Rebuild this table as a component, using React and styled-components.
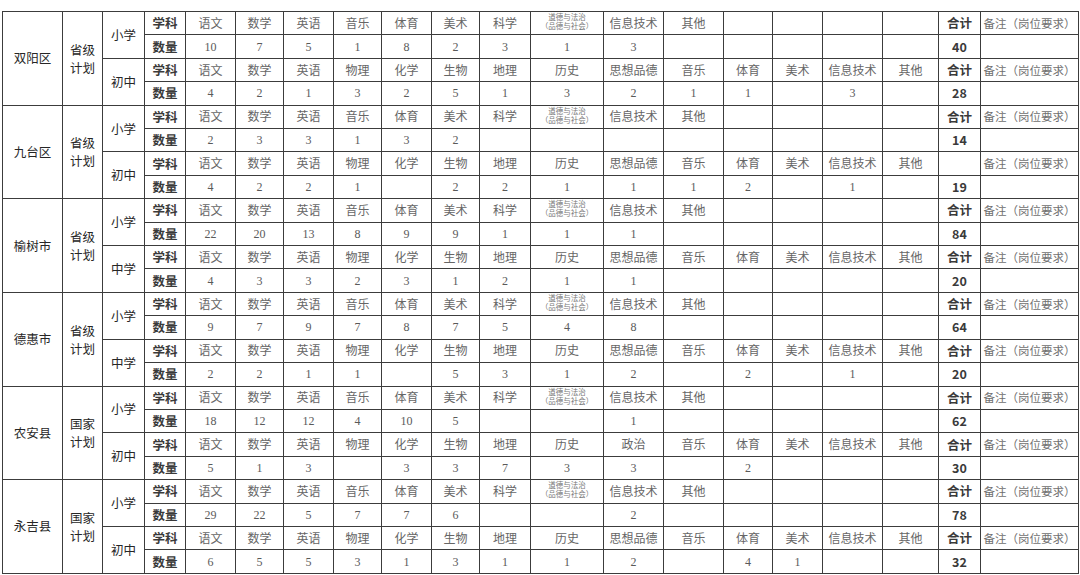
import React from 'react'
import styled, { createGlobalStyle } from 'styled-components'

const GlobalStyle = createGlobalStyle`
  html, body {
    margin: 0;
    padding: 0;
    background: #ffffff;
  }
  body {
    font-family: "Liberation Serif", "Noto Sans CJK SC", serif;
  }
`

const COLS = [60, 40, 42, 41, 50, 48, 50, 48, 50, 48, 51, 73, 60, 60, 49, 50, 60, 56, 42, 98]

const PRIMARY = ['语文', '数学', '英语', '音乐', '体育', '美术', '科学', 'DF', '信息技术', '其他', '', '', '', '']
const MIDDLE = ['语文', '数学', '英语', '物理', '化学', '生物', '地理', '历史', '思想品德', '音乐', '体育', '美术', '信息技术', '其他']
const MIDDLE_ZZ = ['语文', '数学', '英语', '物理', '化学', '生物', '地理', '历史', '政治', '音乐', '体育', '美术', '信息技术', '其他']

const blocks = [
  {
    name: '双阳区', plan: ['省级', '计划'], second: '初中',
    rows: [
      { subjects: PRIMARY, total: '合计', counts: ['10', '7', '5', '1', '8', '2', '3', '1', '3', '', '', '', '', ''], sum: '40' },
      { subjects: MIDDLE, total: '合计', counts: ['4', '2', '1', '3', '2', '5', '1', '3', '2', '1', '1', '', '3', ''], sum: '28' },
    ],
  },
  {
    name: '九台区', plan: ['省级', '计划'], second: '初中',
    rows: [
      { subjects: PRIMARY, total: '合计', counts: ['2', '3', '3', '1', '3', '2', '', '', '', '', '', '', '', ''], sum: '14' },
      { subjects: MIDDLE, total: '', counts: ['4', '2', '2', '1', '', '2', '2', '1', '1', '1', '2', '', '1', ''], sum: '19' },
    ],
  },
  {
    name: '榆树市', plan: ['省级', '计划'], second: '中学',
    rows: [
      { subjects: PRIMARY, total: '合计', counts: ['22', '20', '13', '8', '9', '9', '1', '1', '1', '', '', '', '', ''], sum: '84' },
      { subjects: MIDDLE, total: '合计', counts: ['4', '3', '3', '2', '3', '1', '2', '1', '1', '', '', '', '', ''], sum: '20' },
    ],
  },
  {
    name: '德惠市', plan: ['省级', '计划'], second: '中学',
    rows: [
      { subjects: PRIMARY, total: '合计', counts: ['9', '7', '9', '7', '8', '7', '5', '4', '8', '', '', '', '', ''], sum: '64' },
      { subjects: MIDDLE, total: '合计', counts: ['2', '2', '1', '1', '', '5', '3', '1', '2', '', '2', '', '1', ''], sum: '20' },
    ],
  },
  {
    name: '农安县', plan: ['国家', '计划'], second: '初中',
    rows: [
      { subjects: PRIMARY, total: '合计', counts: ['18', '12', '12', '4', '10', '5', '', '', '1', '', '', '', '', ''], sum: '62' },
      { subjects: MIDDLE_ZZ, total: '合计', counts: ['5', '1', '3', '', '3', '3', '7', '3', '3', '', '2', '', '', ''], sum: '30' },
    ],
  },
  {
    name: '永吉县', plan: ['国家', '计划'], second: '初中',
    rows: [
      { subjects: PRIMARY, total: '合计', counts: ['29', '22', '5', '7', '7', '6', '', '', '2', '', '', '', '', ''], sum: '78' },
      { subjects: MIDDLE, total: '合计', counts: ['6', '5', '5', '3', '1', '3', '1', '1', '2', '', '4', '1', '', ''], sum: '32' },
    ],
  },
]

const Table = styled.table`
  margin: 11px 0 0 2px;
  width: 1076px;
  table-layout: fixed;
  border-collapse: collapse;
  border: 1px solid #3c3c3c;
`

const Row = styled.tr`
  height: 23.42px;
`

const Cell = styled.td`
  border: 1px solid #3c3c3c;
  padding: 0;
  text-align: center;
  vertical-align: middle;
  font-size: 12px;
  line-height: 14px;
  color: #5a5a5a;
  font-family: "Liberation Serif", "Noto Sans CJK SC", serif;
  white-space: nowrap;
  overflow: hidden;
`

const Label = styled(Cell)`
  font-family: "Noto Sans CJK SC", "Liberation Sans", sans-serif;
  font-weight: ${p => (p.$bold ? 700 : 400)};
  color: ${p => (p.$bold ? '#3a3a3a' : '#262626')};
  font-size: 12.5px;
`

const Plan = styled.div`
  display: flex;
  flex-direction: column;
  align-items: center;
  gap: 3px;
  line-height: 15px;
`

const Tiny = styled.div`
  display: flex;
  flex-direction: column;
  align-items: center;
  font-size: 7.5px;
  line-height: 9px;
  color: #777;
  transform: translateY(-1px);
`

const Muted = styled.span`
  font-family: "Noto Sans CJK SC", sans-serif;
  font-weight: 400;
  color: #666;
`

const Note = styled.span`
  font-family: "Noto Sans CJK SC", sans-serif;
  font-size: 11.5px;
  color: #707070;
`

function Subject({ text }) {
  if (text === 'DF') {
    return (
      <Tiny>
        <span>道德与法治</span>
        <span>（品德与社会）</span>
      </Tiny>
    )
  }
  return <Muted>{text}</Muted>
}

function Block({ block }) {
  const levels = ['小学', block.second]
  return block.rows.map((r, i) => (
    <React.Fragment key={i}>
      <Row>
        {i === 0 && (
          <>
            <Label rowSpan={4}>{block.name}</Label>
            <Label rowSpan={4}>
              <Plan>
                <span>{block.plan[0]}</span>
                <span>{block.plan[1]}</span>
              </Plan>
            </Label>
          </>
        )}
        <Label rowSpan={2}>{levels[i]}</Label>
        <Label $bold>学科</Label>
        {r.subjects.map((s, k) => (
          <Cell key={k}><Subject text={s} /></Cell>
        ))}
        <Label $bold>{r.total}</Label>
        <Cell><Note>备注（岗位要求）</Note></Cell>
      </Row>
      <Row>
        <Label $bold>数量</Label>
        {r.counts.map((c, k) => (
          <Cell key={k}>{c}</Cell>
        ))}
        <Label $bold>{r.sum}</Label>
        <Cell />
      </Row>
    </React.Fragment>
  ))
}

export default function App() {
  return (
    <>
      <GlobalStyle />
      <Table>
        <colgroup>
          {COLS.map((w, i) => (
            <col key={i} style={{ width: w }} />
          ))}
        </colgroup>
        <tbody>
          {blocks.map(b => (
            <Block key={b.name} block={b} />
          ))}
        </tbody>
      </Table>
    </>
  )
}
